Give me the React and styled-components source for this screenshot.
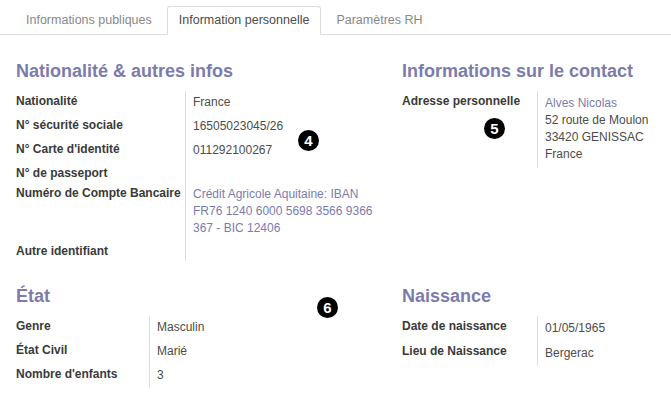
import React from 'react';
import styled, {createGlobalStyle} from 'styled-components';

const GlobalStyle = createGlobalStyle`
    body {
        margin: 0;
        background: #fff;
        font-family: "Liberation Sans", Arial, sans-serif;
    }
`

const Page = styled.div`
    width: 671px;
    height: 397px;
    overflow: hidden;
    background: #fff;
`

const TabBar = styled.div`
    display: flex;
    gap: 3px;
    margin-top: 6px;
    padding-left: 14px;
    border-bottom: 1px solid #dcdcdc;
`

const Tab = styled.div`
    box-sizing: border-box;
    height: 28px;
    margin-bottom: -1px;
    padding: 0 11px;
    line-height: 27px;
    font-size: 12.5px;
    border: 1px solid transparent;
    border-bottom: none;
    border-radius: 3px 3px 0 0;
    color: ${props => props.active ? '#4c4c4c' : '#888'};
    ${props => props.active ? 'background: #fff; border-color: #dcdcdc; height: 29px;' : ''}
`

const Content = styled.div`
    position: relative;
    display: grid;
    grid-template-columns: 370px 1fr;
    column-gap: 16px;
    row-gap: 25px;
    padding: 26px 16px 0;
`

const Section = styled.div``

const Title = styled.h2`
    margin: 0 0 10px;
    font-size: 18px;
    line-height: 20px;
    font-weight: bold;
    color: #7c7bad;
`

const Table = styled.div`
    display: grid;
    grid-template-columns: ${props => props.labelWidth}px 1fr;
    margin-top: ${props => props.shift || 0}px;
`

const Label = styled.div`
    padding: 2px 0;
    line-height: 16px;
    font-size: 12px;
    font-weight: bold;
    color: #3a3a3a;
`

const Value = styled.div`
    box-sizing: border-box;
    min-height: 20px;
    padding: ${props => props.top ?? 3}px 0 4px 7px;
    border-left: 1px solid #dedede;
    line-height: 17px;
    font-size: 12px;
    color: #4c4c4c;
`

const Link = styled.span`
    color: #7c7bad;
`

const Badge = styled.span`
    position: absolute;
    left: ${props => props.x}px;
    top: ${props => props.y}px;
    width: 21px;
    height: 21px;
    border-radius: 50%;
    background: #000;
    color: #fff;
    font-size: 15px;
    font-weight: bold;
    line-height: 21px;
    text-align: center;
`

const Row = ({label, top, children}) => (<>
    <Label>{label}</Label>
    <Value top={top}>{children}</Value>
</>)

export default function App() {
    return (<Page>
        <GlobalStyle/>
        <TabBar>
            <Tab>Informations publiques</Tab>
            <Tab active>Information personnelle</Tab>
            <Tab>Paramètres RH</Tab>
        </TabBar>

        <Content>
            <Section>
                <Title>Nationalité &amp; autres infos</Title>
                <Table labelWidth={169}>
                    <Row label={'Nationalité'}>France</Row>
                    <Row label={'N° sécurité sociale'}>16505023045/26</Row>
                    <Row label={"N° Carte d'identité"}>011292100267</Row>
                    <Row label={'N° de passeport'}/>
                    <Row label={'Numéro de Compte Bancaire'}>
                        <Link>Crédit Agricole Aquitaine: IBAN<br/>FR76 1240 6000 5698 3566 9366<br/>367 - BIC 12406</Link>
                    </Row>
                    <Row label={'Autre identifiant'}/>
                </Table>
            </Section>

            <Section>
                <Title>Informations sur le contact</Title>
                <Table labelWidth={135} shift={1}>
                    <Row label={'Adresse personnelle'} top={4}>
                        <Link>Alves Nicolas</Link><br/>
                        52 route de Moulon<br/>
                        33420 GENISSAC<br/>
                        France
                    </Row>
                </Table>
            </Section>

            <Section>
                <Title>État</Title>
                <Table labelWidth={133}>
                    <Row label={'Genre'}>Masculin</Row>
                    <Row label={'État Civil'}>Marié</Row>
                    <Row label={"Nombre d'enfants"}>3</Row>
                </Table>
            </Section>

            <Section>
                <Title>Naissance</Title>
                <Table labelWidth={135} shift={1}>
                    <Row label={'Date de naissance'} top={4}>01/05/1965</Row>
                    <Row label={'Lieu de Naissance'} top={4}>Bergerac</Row>
                </Table>
            </Section>

            <Badge x={298} y={95}>4</Badge>
            <Badge x={484} y={83}>5</Badge>
            <Badge x={317} y={262}>6</Badge>
        </Content>
    </Page>);
}
